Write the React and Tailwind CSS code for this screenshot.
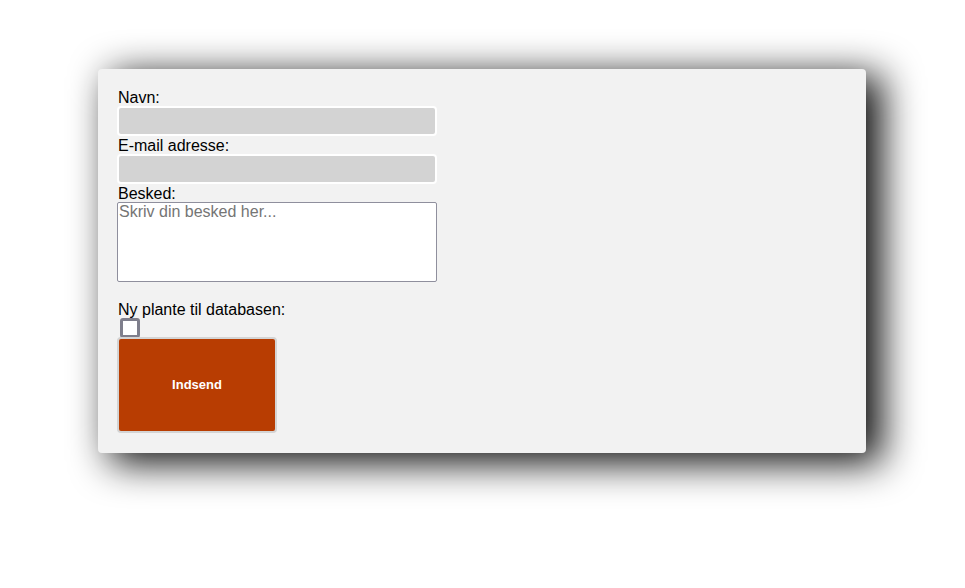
import React from 'react';

const App = () => {
  return (
    <div className="min-h-[588px] w-full bg-white font-['Liberation_Sans',Arial,sans-serif] text-black">
      <div className="pl-[98px] pt-[69px]">
        <form className="flex w-[768px] flex-col items-start rounded-[4px] bg-[#f2f2f2] px-5 pt-5 pb-5 shadow-[14px_8px_38px_2px_rgba(0,0,0,0.95)]">
          <label className="text-base leading-[17px]">Navn:</label>
          <input type="text" className="h-[30px] w-[320px] -ml-[1px] rounded-[4px] border-2 border-white bg-[#d3d3d3] outline-none" />
          <label className="mt-[1px] text-base leading-[17px]">E-mail adresse:</label>
          <input type="email" className="h-[30px] w-[320px] -ml-[1px] rounded-[4px] border-2 border-white bg-[#d3d3d3] outline-none" />
          <label className="mt-[1px] text-base leading-[17px]">Besked:</label>
          <textarea
            placeholder="Skriv din besked her..."
            className="h-[80px] w-[320px] -ml-[1px] resize-none rounded-[2px] border border-[#8f8f9d] bg-white px-[1px] text-base leading-[18px] placeholder:text-[#757575] outline-none"
          />
          <label className="mt-[19px] text-base leading-[17px]">Ny plante til databasen:</label>
          <div className="ml-[2px] h-[20px] w-[20px] rounded-[3px] border-[3px] border-[#7f7f8c] bg-white" />
          <button
            type="button"
            className="-mt-[1px] -ml-[1px] flex h-[96px] w-[160px] items-center justify-center rounded-[4px] border-2 border-[#d4d4d4] bg-[#b83d02] text-[13px] font-bold text-white"
          >
            Indsend
          </button>
        </form>
      </div>
    </div>
  );
};

export default App;
